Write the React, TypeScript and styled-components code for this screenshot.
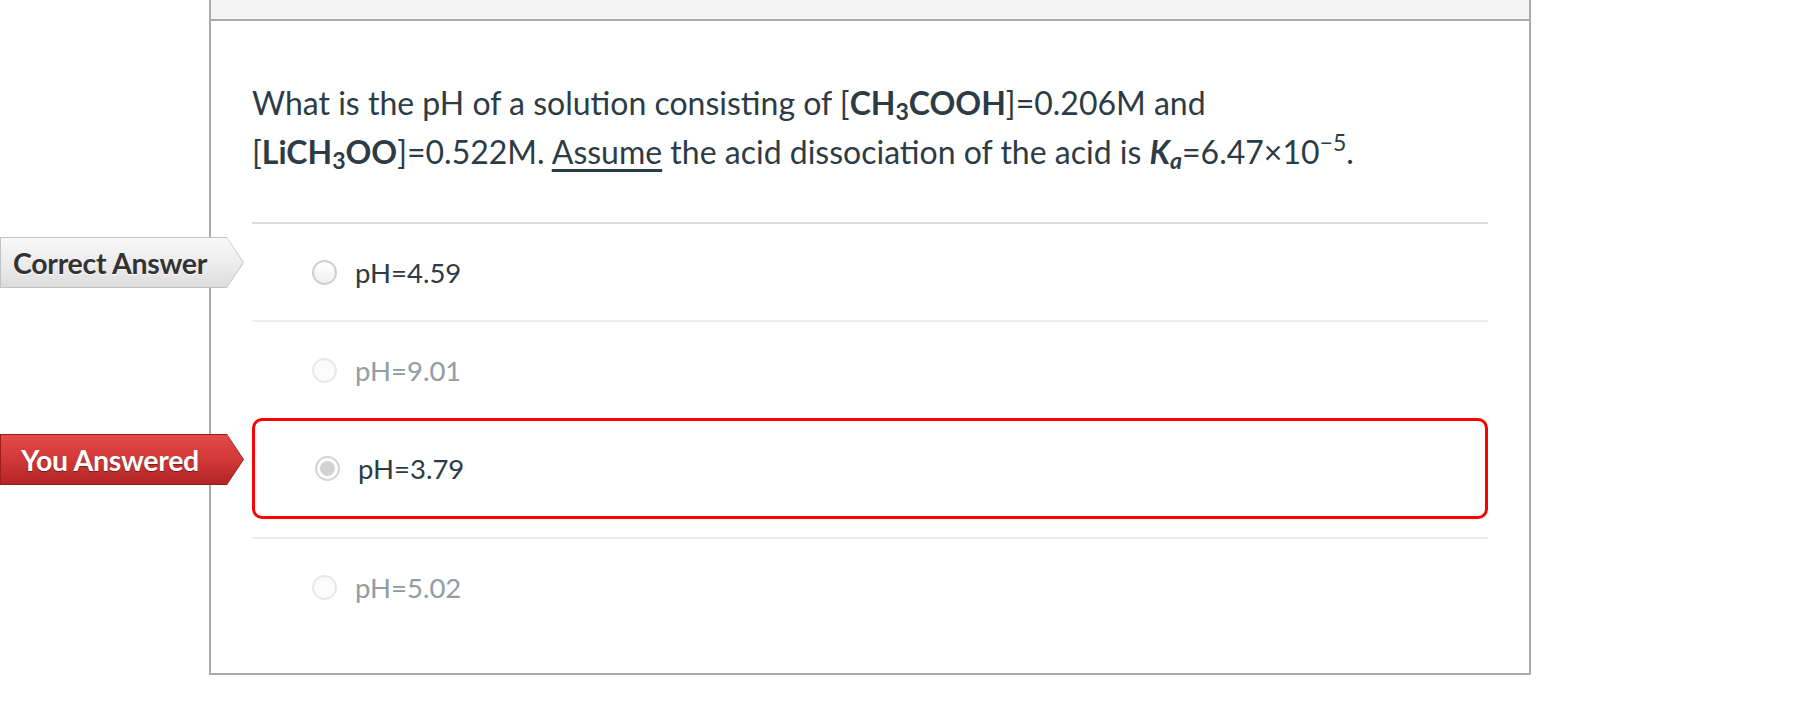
import React from 'react';
import styled, { createGlobalStyle, css } from 'styled-components';

const GlobalStyle = createGlobalStyle`
  html, body {
    margin: 0;
    padding: 0;
    background: #fff;
  }
  body {
    font-family: Lato, "Open Sans", "Liberation Sans", sans-serif;
    color: #2d3b45;
  }
`;

const QuizBox = styled.div`
  margin-left: 209px;
  width: 1322px;
  box-sizing: border-box;
  border: 2px solid #aaaaaa;
  border-top: none;
  background: #fff;
`;

const Header = styled.div`
  height: 19px;
  background: #f4f4f4;
  border-bottom: 2px solid #aaaaaa;
`;

const Body = styled.div`
  padding: 0 41px 38px 41px;
`;

const Question = styled.div`
  padding: 57px 0 46px;
  border-bottom: 2px solid #dcdcdc;
  font-size: 32px;
  line-height: 49px;
  color: #2d3b45;

  sub, sup {
    line-height: 0;
    font-size: 0.72em;
  }
  sub {
    vertical-align: -0.22em;
  }
  sup {
    vertical-align: 0.55em;
  }
`;

const Underlined = styled.span`
  text-decoration: underline;
  text-decoration-thickness: 3px;
  text-underline-offset: 5px;
`;

const Constant = styled.b`
  font-style: italic;
`;

const AnswerList = styled.div`
  display: flex;
  flex-direction: column;
`;

const AnswerItem = styled.div<{ $divider: boolean; $selected: boolean }>`
  position: relative;
  border-top: ${p => (p.$divider ? '2px solid #ececec' : 'none')};
  ${p => p.$selected && css`margin-bottom: 18px;`}
`;

const AnswerBox = styled.div<{ $selected: boolean }>`
  display: flex;
  align-items: center;
  gap: 18px;
  box-sizing: border-box;
  height: ${p => (p.$selected ? '101px' : '96px')};
  padding-left: 60px;
  border-radius: 10px;
  border: ${p => (p.$selected ? '3px solid #ff0000' : 'none')};
`;

const Radio = styled.span<{ $state: 'normal' | 'muted' | 'checked' }>`
  flex: none;
  width: 25px;
  height: 25px;
  box-sizing: border-box;
  border-radius: 50%;
  position: relative;
  ${p => p.$state === 'normal' && css`
    border: 2px solid #cfcfcf;
    background: linear-gradient(#ffffff, #f1f1f1);
  `}
  ${p => p.$state === 'muted' && css`
    border: 2px solid #e8e8e8;
    background: #fbfbfb;
  `}
  ${p => p.$state === 'checked' && css`
    border: 2px solid #d4d4d4;
    background: #fff;
    &::after {
      content: '';
      position: absolute;
      left: 3px;
      top: 3px;
      width: 15px;
      height: 15px;
      border-radius: 50%;
      background: #d2d2d2;
    }
  `}
`;

const AnswerText = styled.span<{ $muted: boolean }>`
  font-size: 27.5px;
  color: ${p => (p.$muted ? '#939ca3' : '#2d3b45')};
`;

const BadgeShape = styled.div<{ $tone: 'correct' | 'wrong'; $top: number }>`
  position: absolute;
  left: -252px;
  top: ${p => p.$top}px;
  width: 244px;
  height: 51px;
  padding: 1px;
  box-sizing: border-box;
  clip-path: polygon(0 0, 227px 0, 100% 50%, 227px 100%, 0 100%);
  background: ${p => (p.$tone === 'correct' ? '#c2c2c2' : '#9a1e1e')};
`;

const BadgeFace = styled.div<{ $tone: 'correct' | 'wrong' }>`
  width: 100%;
  height: 100%;
  display: flex;
  align-items: center;
  justify-content: center;
  padding-right: 24px;
  box-sizing: border-box;
  clip-path: polygon(0 0, 226px 0, 100% 50%, 226px 100%, 0 100%);
  font-size: 28.5px;
  font-weight: 700;
  letter-spacing: -0.3px;
  white-space: nowrap;
  ${p => p.$tone === 'correct'
    ? css`
      background: linear-gradient(#f8f8f8, #ececec 55%, #dcdcdc);
      color: #333;
      text-shadow: 0 1px 0 #fff;
    `
    : css`
      background: linear-gradient(#e34a4a, #d23838 50%, #b22525);
      color: #fff;
      text-shadow: 0 1px 1px rgba(0, 0, 0, 0.45);
    `}
`;

type Answer = {
  text: string;
  state: 'normal' | 'muted' | 'checked';
  badge?: 'correct' | 'wrong';
};

const answers: Answer[] = [
  { text: 'pH=4.59', state: 'normal', badge: 'correct' },
  { text: 'pH=9.01', state: 'muted' },
  { text: 'pH=3.79', state: 'checked', badge: 'wrong' },
  { text: 'pH=5.02', state: 'muted' },
];

const App: React.FC = () => {
  return (
    <>
      <GlobalStyle />
      <QuizBox>
        <Header />
        <Body>
          <Question>
            What is the pH of a solution consisting of [<b>CH<sub>3</sub>COOH</b>]=0.206M and
            <br />
            [<b>LiCH<sub>3</sub>OO</b>]=0.522M. <Underlined>Assume</Underlined> the acid dissociation of the acid is{' '}
            <Constant>K<sub>a</sub></Constant>=6.47×10<sup>−5</sup>.
          </Question>
          <AnswerList>
            {answers.map((a, i) => {
              const selected = a.state === 'checked';
              const divider = i > 0 && !selected;
              return (
                <AnswerItem key={a.text} $divider={divider} $selected={selected}>
                  {a.badge && (
                    <BadgeShape $tone={a.badge} $top={a.badge === 'wrong' ? 16 : 13}>
                      <BadgeFace $tone={a.badge}>
                        {a.badge === 'correct' ? 'Correct Answer' : 'You Answered'}
                      </BadgeFace>
                    </BadgeShape>
                  )}
                  <AnswerBox $selected={selected}>
                    <Radio $state={a.state} />
                    <AnswerText $muted={a.state === 'muted'}>{a.text}</AnswerText>
                  </AnswerBox>
                </AnswerItem>
              );
            })}
          </AnswerList>
        </Body>
      </QuizBox>
    </>
  );
};

export default App;
